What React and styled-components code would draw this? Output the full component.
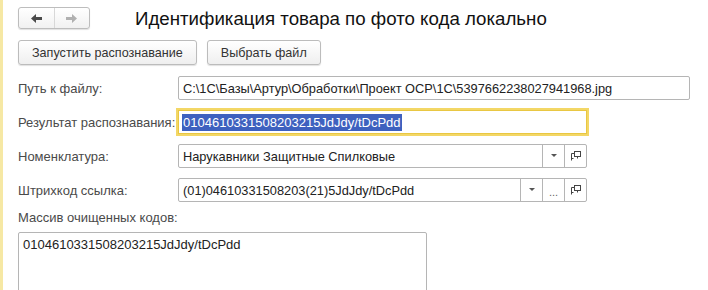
import React from 'react'
import styled, { createGlobalStyle } from 'styled-components'

const GlobalStyle = createGlobalStyle`
    body {
        margin: 0;
        background: #fff;
        font-family: "Liberation Sans", Arial, sans-serif;
    }
`

function OpenIcon() {
    return (
        <svg width="10" height="10" viewBox="0 0 10 10">
            <rect x="3.5" y="0.5" width="6" height="5" fill="none" stroke="#444" />
            <path d="M3.5 2.5 H0.5 V9.5 M0.5 7.5 H2.5 M6.5 5.5 V7.5" fill="none" stroke="#444" />
        </svg>
    )
}

function ArrowIcon({ dir, color }) {
    const d = dir === 'left' ? 'M0 4.5 L5 0 V3 H11 V6 H5 V9 Z' : 'M11 4.5 L6 0 V3 H0 V6 H6 V9 Z'
    return (
        <svg width="11" height="9" viewBox="0 0 11 9">
            <path d={d} fill={color} />
        </svg>
    )
}

function Field({ value, buttons = [], width }) {
    return (
        <FieldBox width={width}>
            <FieldText>{value}</FieldText>
            {buttons.map((b, i) => (
                <FieldButton key={i}>
                    {b === 'drop' && <DropArrow />}
                    {b === 'more' && <Dots>...</Dots>}
                    {b === 'open' && <OpenIcon />}
                </FieldButton>
            ))}
        </FieldBox>
    )
}

export default function App() {
    return (
        <Page>
            <GlobalStyle />
            <Stripe />
            <Main>
                <Header>
                    <NavGroup>
                        <NavButton><ArrowIcon dir="left" color="#4a4a4a" /></NavButton>
                        <NavButton><ArrowIcon dir="right" color="#b0b0b0" /></NavButton>
                    </NavGroup>
                    <Title>Идентификация товара по фото кода локально</Title>
                </Header>

                <Toolbar>
                    <Button>Запустить распознавание</Button>
                    <Button>Выбрать файл</Button>
                </Toolbar>

                <Form>
                    <Label>Путь к файлу:</Label>
                    <Field width={512} value="C:\1C\Базы\Артур\Обработки\Проект OCP\1C\5397662238027941968.jpg" />

                    <Label>Результат распознавания:</Label>
                    <FocusField>
                        <Selected>0104610331508203215JdJdy/tDcPdd</Selected>
                    </FocusField>

                    <Label>Номенклатура:</Label>
                    <Field width={409} value="Нарукавники Защитные Спилковые" buttons={['drop', 'open']} />

                    <Label>Штрихкод ссылка:</Label>
                    <Field width={409} value="(01)04610331508203(21)5JdJdy/tDcPdd" buttons={['drop', 'more', 'open']} />
                </Form>

                <ListLabel>Массив очищенных кодов:</ListLabel>
                <ListBox>0104610331508203215JdJdy/tDcPdd</ListBox>
            </Main>
        </Page>
    )
}

const Page = styled.div`
    display: flex;
    height: 290px;
    overflow: hidden;
`
const Stripe = styled.div`
    width: 3px;
    flex-shrink: 0;
    background: #f6e8a4;
`
const Main = styled.div`
    flex: 1;
    padding: 7px 0 0 15px;
    display: flex;
    flex-direction: column;
    align-items: flex-start;
`
const Header = styled.div`
    display: flex;
    align-items: center;
    height: 22px;
`
const NavGroup = styled.div`
    display: flex;
    width: 72px;
    height: 22px;
    box-sizing: border-box;
    border: 1px solid #bdbdbd;
    border-radius: 3px;
    background: linear-gradient(#ffffff, #f1f1f1);
    box-shadow: 0 1px 1px rgba(0, 0, 0, 0.12);
`
const NavButton = styled.div`
    flex: 1;
    display: flex;
    align-items: center;
    justify-content: center;
    & + & {
        border-left: 1px solid #d8d8d8;
    }
`
const Title = styled.div`
    margin-left: 45px;
    margin-top: 2px;
    font-size: 18.7px;
    color: #111;
    white-space: nowrap;
`
const Toolbar = styled.div`
    display: flex;
    gap: 10px;
    margin-top: 11px;
`
const Button = styled.div`
    height: 25px;
    box-sizing: border-box;
    padding: 0 13px;
    display: flex;
    align-items: center;
    font-size: 12.6px;
    color: #333;
    border: 1px solid #bcbcbc;
    border-radius: 3px;
    background: linear-gradient(#ffffff, #efefef);
    box-shadow: 0 1px 1px rgba(0, 0, 0, 0.12);
`
const Form = styled.div`
    display: grid;
    grid-template-columns: 160px auto;
    row-gap: 10px;
    margin-top: 11px;
    align-items: center;
`
const Label = styled.div`
    font-size: 13px;
    color: #4a4a4a;
    white-space: nowrap;
`
const FieldBox = styled.div`
    display: flex;
    width: ${p => p.width}px;
    height: 24px;
    box-sizing: border-box;
    border: 1px solid #b5b5b5;
    border-radius: 2px;
    background: #fff;
`
const FieldText = styled.div`
    flex: 1;
    padding: 0 4px;
    display: flex;
    align-items: center;
    font-size: 12.8px;
    color: #222;
    white-space: nowrap;
    overflow: hidden;
`
const FieldButton = styled.div`
    width: 21px;
    display: flex;
    align-items: center;
    justify-content: center;
    border-left: 1px solid #b5b5b5;
`
const DropArrow = styled.div`
    width: 0;
    height: 0;
    border-left: 3px solid transparent;
    border-right: 3px solid transparent;
    border-top: 3px solid #555;
    margin-top: -1px;
`
const Dots = styled.span`
    font-size: 11px;
    color: #666;
    margin-top: 4px;
`
const FocusField = styled.div`
    width: 409px;
    height: 24px;
    box-sizing: border-box;
    border: 1px solid #e9c743;
    box-shadow: 0 0 0 2px #f3d766;
    padding: 0 3px;
    display: flex;
    align-items: center;
    background: #fff;
`
const Selected = styled.span`
    font-size: 13px;
    line-height: 17px;
    color: #fff;
    background: #3e61bf;
    padding: 0 1px;
`
const ListLabel = styled.div`
    margin-top: 8px;
    font-size: 13px;
    color: #4a4a4a;
`
const ListBox = styled.div`
    margin-top: 7px;
    width: 409px;
    height: 100px;
    flex-shrink: 0;
    box-sizing: border-box;
    border: 1px solid #b5b5b5;
    border-radius: 2px;
    padding: 4px 4px;
    font-size: 13px;
    color: #222;
`
